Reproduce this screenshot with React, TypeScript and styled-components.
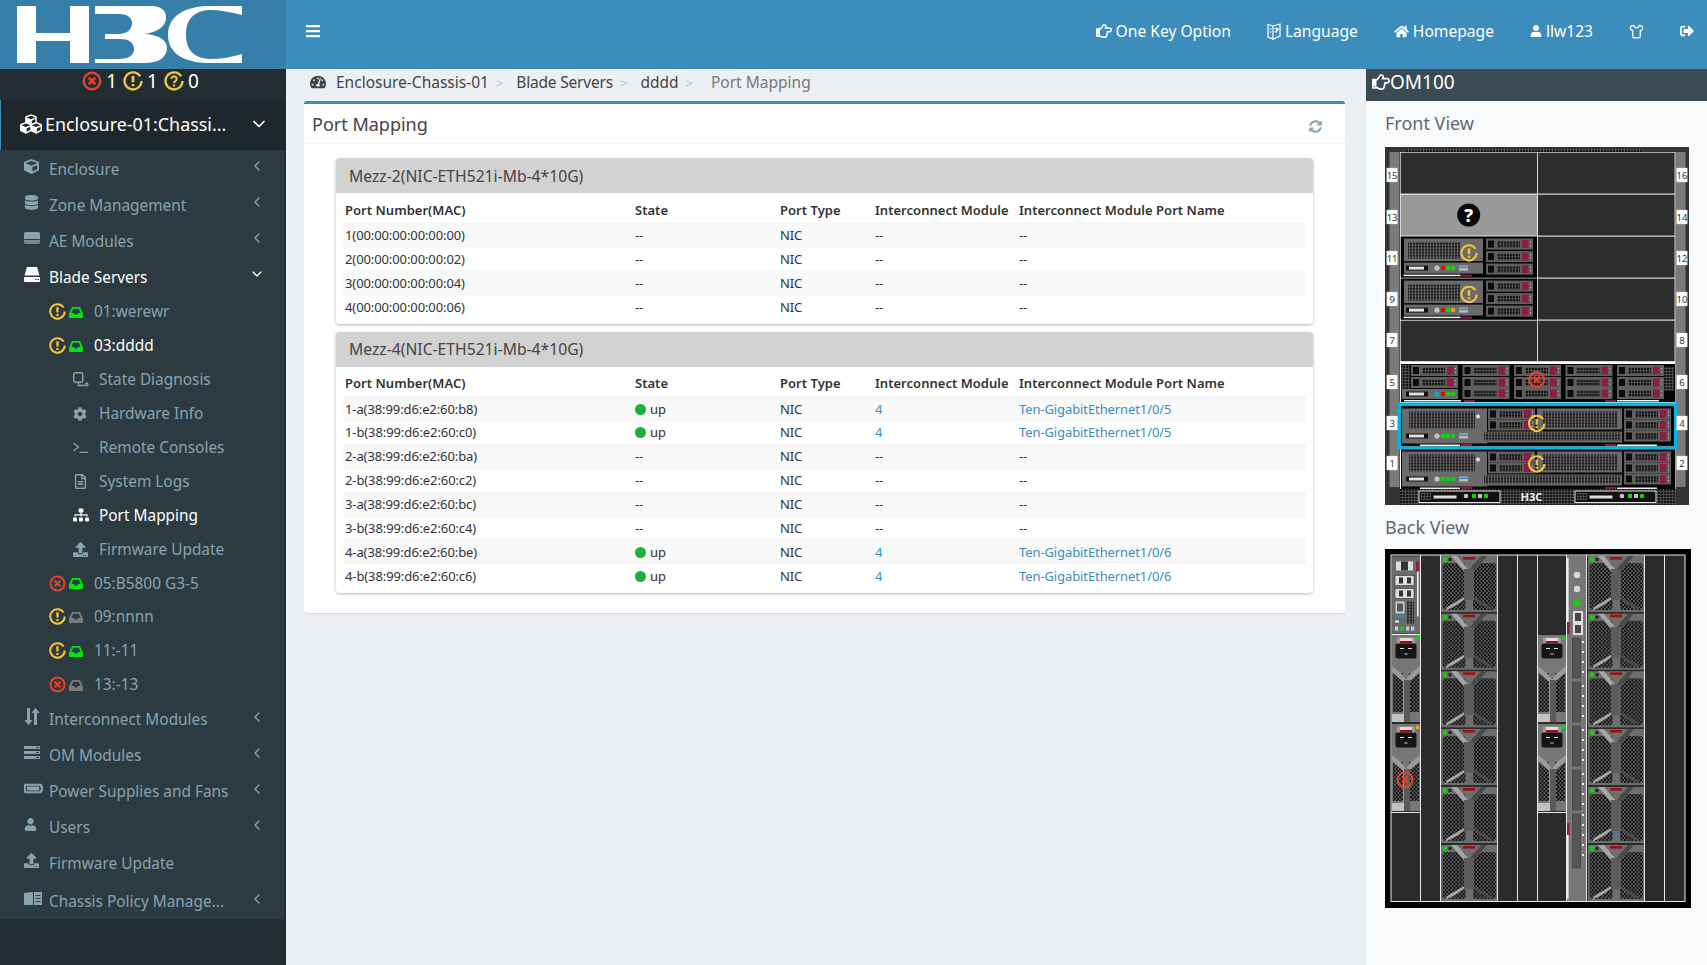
import React from "react";
import styled, { createGlobalStyle } from "styled-components";
import {
  FaBars,
  FaBatteryFull,
  FaCog,
  FaCube,
  FaCubes,
  FaDatabase,
  FaHome,
  FaRegFileAlt,
  FaRegHandPointRight,
  FaSignOutAlt,
  FaSitemap,
  FaSyncAlt,
  FaTachometerAlt,
  FaUpload,
  FaUser,
} from "react-icons/fa";
import { ChevronDown, ChevronLeft, Shirt } from "lucide-react";

const font = `"Noto Sans", "Open Sans", Arial, sans-serif`;

const GlobalStyle = createGlobalStyle`
  html, body { margin: 0; height: 100%; overflow: hidden; }
  body { font-family: ${font}; background: #ecf0f5; color: #333; }
  * { box-sizing: border-box; }
`;

const Page = styled.div`
  display: flex;
  flex-direction: column;
  height: 100vh;
`;

const TopBar = styled.header`
  display: flex;
  height: 69px;
  flex: none;
  background: #3c8dbc;
  color: #fff;
`;

const LogoBox = styled.div`
  width: 286px;
  flex: none;
  background: #367fa9;
  svg { display: block; }
`;

const Burger = styled.div`
  display: flex;
  align-items: center;
  padding: 0 0 7px 19px;
  font-size: 16px;
`;

const TopNav = styled.nav`
  margin-left: auto;
  display: flex;
  align-items: center;
  padding: 0 13px 7px 0;
  font-size: 15.6px;
`;

const TopLink = styled.a<{ $gap?: number }>`
  display: flex;
  align-items: center;
  gap: 4px;
  margin-right: ${({ $gap }) => $gap ?? 36}px;
  svg { flex: none; }
`;

const Body = styled.div`
  display: flex;
  flex: 1;
  min-height: 0;
`;

const Sidebar = styled.aside`
  width: 286px;
  flex: none;
  background: #222d32;
`;

const AlarmRow = styled.div`
  display: flex;
  align-items: center;
  justify-content: center;
  height: 31px;
  gap: 4px;
  padding: 0 3px 8px 0;
  color: #fff;
  font-size: 19px;
  span { margin-right: 2px; }
`;

const ChassisRow = styled.div`
  display: flex;
  align-items: center;
  height: 50px;
  padding: 0 17px 2px 19px;
  background: #1e282c;
  border-left: 1px solid #3c8dbc;
  color: #fff;
  font-size: 17.9px;
  svg:first-child { margin-right: 3px; }
  b { font-weight: 400; flex: 1; white-space: nowrap; }
`;

const SubMenu = styled.div`
  margin-right: 2px;
  padding-top: 1px;
  background: #2c3b41;
  height: 769px;
`;

const MenuRow = styled.div<{ $open?: boolean; $tall?: boolean }>`
  display: flex;
  align-items: center;
  height: ${({ $tall }) => ($tall ? 37 : 36)}px;
  padding: ${({ $tall }) => ($tall ? "3px 19px 0 24px" : "0 19px 0 24px")};
  color: ${({ $open }) => ($open ? "#fff" : "#8aa4af")};
  font-size: 15.4px;
  > span { flex: 1; white-space: nowrap; margin-left: -1px; }
`;

const MenuIcon = styled.i`
  width: 26px;
  flex: none;
  display: flex;
  align-items: center;
  margin-top: -6px;
  font-style: normal;
  line-height: 0;
`;

const Chevron = styled.i`
  display: flex;
  margin-top: -6px;
  font-style: normal;
`;

const BladeRow = styled.div<{ $current?: boolean }>`
  display: flex;
  align-items: center;
  height: 33.9px;
  padding-left: 49px;
  color: ${({ $current }) => ($current ? "#fff" : "#8aa4af")};
  font-size: 15.4px;
  span { margin-left: 11px; }
`;

const InboxShape = styled.svg<{ $on: boolean }>`
  margin-left: 3px;
  margin-top: 1px;
  fill: ${({ $on }) => ($on ? "#00e50a" : "#7c7c7c")};
`;

const LeafRow = styled.div<{ $current?: boolean }>`
  display: flex;
  align-items: center;
  height: 33.9px;
  padding-left: 74px;
  color: ${({ $current }) => ($current ? "#fff" : "#8aa4af")};
  font-size: 15.4px;
  i { width: 26px; flex: none; display: flex; line-height: 0; margin-left: -1px; }
`;

const Main = styled.main`
  flex: 1;
  min-width: 0;
  padding: 0 20px 0 18px;
`;

const Crumbs = styled.div`
  display: flex;
  align-items: center;
  height: 32px;
  padding: 0 0 7px 6px;
  font-size: 15.5px;
  color: #444;
  svg { margin-right: 10px; }
`;

const Crumb = styled.span<{ $last?: boolean; $tight?: boolean }>`
  color: ${({ $last }) => ($last ? "#777" : "#444")};
  margin-left: ${({ $last }) => ($last ? 5 : 0)}px;
  letter-spacing: ${({ $tight }) => ($tight ? "-0.2px" : "0")};
  &:not(:last-child)::after {
    content: ">";
    color: #bbb;
    font-size: 13px;
    letter-spacing: 0;
    margin: 0 13px 0 7px;
  }
`;

const Card = styled.section`
  background: #fff;
  border-top: 3px solid #3c8dbc;
  border-radius: 3px;
  box-shadow: 0 1px 1px rgba(0, 0, 0, 0.1);
  height: 512px;
`;

const CardHead = styled.div`
  display: flex;
  align-items: center;
  justify-content: space-between;
  height: 40px;
  padding: 0 23px 0 8px;
  border-bottom: 1px solid #f4f4f4;
  font-size: 18px;
  color: #444;
  svg { color: #8aa4af; margin-top: 6px; }
`;

const CardBody = styled.div`
  padding: 14px 32px 0;
  display: flex;
  flex-direction: column;
  gap: 8px;
`;

const Mezz = styled.div`
  background: #fff;
  border-radius: 4px;
  box-shadow: 0 1px 3px rgba(0, 0, 0, 0.3);
  padding-bottom: 5px;
`;

const MezzTitle = styled.div`
  display: flex;
  align-items: center;
  height: 35px;
  padding-left: 13px;
  background: #d2d2d2;
  border-radius: 4px 4px 0 0;
  font-size: 15.7px;
  color: #444;
`;

const PortTable = styled.table`
  table-layout: fixed;
  width: 963px;
  margin-left: 7px;
  border-collapse: collapse;
  font-size: 13px;
  color: #333;
  th {
    height: 30px;
    text-align: left;
    padding: 4px 2px 0;
    font-weight: 600;
    letter-spacing: 0.03px;
    white-space: nowrap;
  }
  td {
    height: 23.9px;
    padding: 0 2px;
    border-top: 1px solid #f4f4f4;
    letter-spacing: -0.1px;
    white-space: nowrap;
  }
  tbody tr:nth-child(odd) { background: #f9f9f9; }
  a { color: #3c8dbc; }
`;

const Dot = styled.i`
  display: inline-block;
  width: 11px;
  height: 11px;
  margin-right: 4px;
  border-radius: 50%;
  background: #1bb03e;
  vertical-align: -1px;
`;

const RightPanel = styled.aside`
  width: 342px;
  flex: none;
  background: #f9fafc;
  border-left: 1px solid #e4e7ec;
`;

const PanelHead = styled.div`
  display: flex;
  align-items: center;
  gap: 0;
  height: 32px;
  padding: 0 0 6px 6px;
  background: #3a4b55;
  color: #fff;
  font-size: 19px;
`;

const PanelBody = styled.div`
  padding: 9px 0 0 19px;
`;

const ViewTitle = styled.h4<{ $height: number }>`
  margin: 0;
  height: ${({ $height }) => $height}px;
  font-size: 18px;
  font-weight: 400;
  line-height: 26px;
  color: #5d6a74;
`;

const Rack = styled.svg`
  display: block;
  margin-bottom: 9px;
`;

type Kind = "warn" | "err" | "ask";

const StatusIcon: React.FC<{ kind: Kind; size?: number }> = ({ kind, size = 17 }) => {
  const c = kind === "err" ? "#e8402f" : "#f2c53d";
  return (
    <svg width={size} height={size} viewBox="0 0 16 16" fill="none">
      {kind === "err" ? (
        <circle cx="8" cy="8" r="6.6" stroke={c} strokeWidth="1.9" />
      ) : (
        <path d="M13.7 4.2A6.8 6.8 0 1 0 14.8 8" stroke={c} strokeWidth="1.9" />
      )}
      {kind === "err" && <path d="M5.4 5.4l5.2 5.2M10.6 5.4l-5.2 5.2" stroke={c} strokeWidth="2" />}
      {kind === "warn" && <path d="M8 4v5M8 10.4v1.8" stroke={c} strokeWidth="2.2" />}
      {kind === "ask" && (
        <path d="M5.9 6.2a2.1 2.1 0 1 1 3.2 1.9c-.8.5-1.1.8-1.1 1.6M8 10.8v1.6" stroke={c} strokeWidth="1.7" />
      )}
    </svg>
  );
};

const Inbox: React.FC<{ on: boolean }> = ({ on }) => (
  <InboxShape $on={on} width="14" height="11" viewBox="0 0 14 11">
    <path d="M3 0h8l3 6.5V10a1 1 0 0 1-1 1H1a1 1 0 0 1-1-1V6.5zM4.2 1.8L2.4 6h2.5l.9 1.6h2.4L9.1 6h2.5L9.8 1.8z" fillRule="evenodd" />
  </InboxShape>
);

const AeIcon = () => (
  <svg width="16" height="12" viewBox="0 0 16 12" fill="#8aa4af">
    <path d="M2 0h12a2 2 0 0 1 2 2v5H0V2a2 2 0 0 1 2-2z" />
    <path d="M0 8h16v2a2 2 0 0 1-2 2H2a2 2 0 0 1-2-2z" opacity=".75" />
  </svg>
);

const BladeIcon = () => (
  <svg width="16" height="15" viewBox="0 0 16 15" fill="#fff">
    <path d="M3 0h10l2.5 8.5H.5z" />
    <path d="M1 10h14a1 1 0 0 1 1 1v3a1 1 0 0 1-1 1H1a1 1 0 0 1-1-1v-3a1 1 0 0 1 1-1zM11 12v1h1.5v-1zM13.5 12v1H15v-1z" fillRule="evenodd" />
  </svg>
);

const ArrowsIcon = () => (
  <svg width="16" height="17" viewBox="0 0 16 17" fill="#8aa4af">
    <path d="M3 0h3v12h2.6L4.5 17 .4 12H3zM10 17h3V5h2.6L11.5 0 7.4 5H10z" />
  </svg>
);

const OmIcon = () => (
  <svg width="16" height="13" viewBox="0 0 16 13" fill="#8aa4af">
    <path d="M0 0h16v3H0zM0 5h16v3H0zM0 10h16v3H0z" />
    <path d="M12 1h3v1h-3zM12 6h3v1h-3zM12 11h3v1h-3z" fill="#2c3b41" />
  </svg>
);

const PolicyIcon = () => (
  <svg width="18" height="13" viewBox="0 0 18 13" fill="#8aa4af">
    <path d="M0 1l9-1v13H0z" />
    <path d="M10 0h8v13h-8zM11.5 3v1h5V3zM11.5 6v1h5V6zM11.5 9v1h5V9z" fillRule="evenodd" />
  </svg>
);

const ScopeIcon = () => (
  <svg width="16" height="15" viewBox="0 0 16 15" fill="none" stroke="#8aa4af" strokeWidth="1.4">
    <rect x=".7" y=".7" width="9" height="9.5" rx="1.5" />
    <path d="M5.5 10.5v3h4.5M10 13.5h1.5" />
    <circle cx="13.7" cy="12.5" r="1.3" />
  </svg>
);

const PromptIcon = () => (
  <svg width="15" height="11" viewBox="0 0 15 11" fill="none" stroke="#8aa4af" strokeWidth="1.2">
    <path d="M.5 1l5 4-5 4M6.5 10.4H15" />
  </svg>
);

const LanguageIcon = () => (
  <svg width="14" height="17" viewBox="0 0 14 17" fill="none" stroke="#fff" strokeWidth="1.2">
    <path d="M1 1.5l5 1.5v13l-5-2zM6 3l7-2v12l-7 3z" />
    <path d="M7.5 5.5h4M9.5 4.5v5M7.8 9c1.5-.3 2.8-1.4 3.4-3" fill="none" />
    <path d="M2.4 6h2.2M2.4 9h2.2" />
  </svg>
);

const HandIcon = styled(FaRegHandPointRight)`
  flex: none;
`;

const Logo = () => (
  <svg width="286" height="69" viewBox="0 0 286 69" fill="#fff">
    <path d="M17 6h19v27h34V6h19v57H70V41H36v22H17z" />
    <path d="M95 6h58c10 1 14 6 13 13-1 8-9 13-21 15 15 1 23 7 22 15-1 9-9 14-22 14H95v-4h24c10 0 15-4 15-10 0-7-6-10-14-10h-15v-5h15c8-1 12-5 12-11 0-6-6-9-13-9H95z" />
    <path d="M242 6v9c-11-3-22-5-33-5-15 1-23 9-23 25 0 15 8 23 23 24 12 0 23-2 33-5v9h-36c-24-1-38-11-38-28 0-18 15-28 39-29z" />
  </svg>
);

const Holes: React.FC<{ id: string; bg: string; hole: string; hex?: boolean }> = ({ id, bg, hole, hex }) =>
  hex ? (
    <pattern id={id} width="3.6" height="4" patternUnits="userSpaceOnUse">
      <rect width="3.6" height="4" fill={bg} />
      <circle cx=".9" cy="1" r="1.3" fill={hole} />
      <circle cx="2.7" cy="3" r="1.3" fill={hole} />
    </pattern>
  ) : (
    <pattern id={id} width="3" height="3" patternUnits="userSpaceOnUse">
      <rect width="3" height="3" fill={bg} />
      <rect width="2.2" height="2.2" fill={hole} />
    </pattern>
  );

const Drive: React.FC<{ x: number; y: number }> = ({ x, y }) => (
  <g transform={`translate(${x} ${y})`}>
    <rect width="47" height="11" fill="#5f5f5f" />
    <rect x="2" y="2" width="6" height="7" fill="#0c0c0c" />
    <rect x="11" y="2.5" width="23" height="6.5" fill="url(#dotsFine)" />
    <rect x="36" y="1.5" width="6.5" height="8" fill="#8e1b47" />
    <rect x="44" y="3" width="1" height="1" fill="#ccc" />
    <rect x="44" y="6.5" width="1" height="1" fill="#ccc" />
  </g>
);

const FrontPort: React.FC<{ x: number; y: number; leds: string[]; blue?: boolean }> = ({ x, y, leds, blue }) => (
  <g transform={`translate(${x} ${y})`}>
    <rect width="22" height="5" fill="#111" />
    <rect x="3" y="1" width="15" height="3" fill="#e2e2e2" />
    <circle cx="31" cy="2.5" r="2.6" fill={leds[0]} />
    <rect x="35" y=".5" width="4" height="4" fill={leds[1]} />
    <rect x="40" y=".5" width="4" height="4" fill={leds[2]} />
    <circle cx="47" cy="2.5" r="2.3" fill={leds[3]} />
    {blue && (
      <g>
        <rect x="53" y="0" width="9" height="5" fill="#bbb" />
        <rect x="53" y="1" width="9" height="1.6" fill="#2b8fd6" />
      </g>
    )}
  </g>
);

const HalfBlade: React.FC<{ y: number; lastLed: string }> = ({ y, lastLed }) => (
  <g transform={`translate(16 ${y})`}>
    <rect width="136" height="41" fill="#050505" />
    <rect x="3" y="2" width="79" height="22.5" fill="#6a6a6a" />
    <rect x="7" y="5.5" width="52" height="16.5" fill="url(#dots)" />
    <rect x="3" y="26" width="79" height="11" fill="#6a6a6a" />
    <FrontPort x={5} y={29} leds={["#bfc3cc", "#ff0000", "#00e000", lastLed]} blue />
    <rect x="2.5" y="38" width="57" height="1.6" fill="#eee" />
    <rect x="60" y="38" width="11" height="2" fill="#8e1b47" />
    <Drive x={85} y={2} />
    <Drive x={85} y={14.5} />
    <Drive x={85} y={27} />
  </g>
);

const FullBlade: React.FC<{ y: number }> = ({ y }) => (
  <g transform={`translate(17 ${y})`}>
    <rect x="-1" y="-2" width="274" height="41" fill="#050505" />
    <rect x="0" y="1" width="85" height="35" fill="#6a6a6a" />
    <rect x="7" y="4" width="66" height="17" fill="url(#dots)" />
    <circle cx="76" cy="9" r="2" fill="#e2e2e2" />
    <FrontPort x={4} y={26} leds={["#bfc3cc", "#00e000", "#00e000", "#00e000"]} blue />
    <rect x="82" y="24" width="138" height="11" fill="#6a6a6a" />
    <rect x="82" y="25" width="137" height="8" fill="url(#dots)" />
    <Drive x={86} y={1} />
    <Drive x={86} y={12} />
    <rect x="135" y="1" width="85" height="21" fill="#6a6a6a" />
    <rect x="140" y="4" width="76" height="16" fill="url(#dots)" />
    <Drive x={222} y={1} />
    <Drive x={222} y={12} />
    <Drive x={222} y={23} />
    <rect x="18" y="37" width="40" height="1.6" fill="#eee" />
    <rect x="59" y="36.5" width="11" height="2" fill="#8e1b47" />
    <rect x="203" y="36.5" width="11" height="2" fill="#8e1b47" />
    <rect x="215" y="37" width="40" height="1.6" fill="#eee" />
  </g>
);

const Bezel: React.FC<{ x: number }> = ({ x }) => (
  <g transform={`translate(${x} 344)`}>
    <rect width="81" height="11.5" fill="#111" stroke="#fff" strokeWidth=".9" />
    <rect x="2" y="2" width="10" height="7" fill="url(#dotsFine)" />
    <rect x="14" y="4" width="24" height="4" fill="#ddd" stroke="#111" />
    <circle cx="47" cy="5" r="2.3" fill="#bfc3cc" />
    <rect x="53" y="3" width="4" height="4" fill="#00e000" />
    <rect x="59" y="3" width="4" height="4" fill="#bfc3cc" />
    <circle cx="67" cy="5" r="2.3" fill="#00e000" />
  </g>
);

const Badge: React.FC<{ x: number; y: number; kind: Kind }> = ({ x, y, kind }) => (
  <g transform={`translate(${x - 9} ${y - 9})`}>
    <StatusIcon kind={kind} size={18} />
  </g>
);

const SlotLabel: React.FC<{ x: number; y: number; n: number }> = ({ x, y, n }) => (
  <g transform={`translate(${x} ${y - 7})`}>
    <rect width="10.6" height="14" fill="#fff" stroke="#ccc" strokeWidth=".4" />
    <text x="5.3" y="10.6" textAnchor="middle" fontFamily={font} fontSize="9.5" fill="#333">
      {n}
    </text>
  </g>
);

const labelY: [number, number][] = [
  [15, 28],
  [13, 70],
  [11, 111],
  [9, 152],
  [7, 193],
  [5, 235],
  [3, 276],
  [1, 316],
];

const FrontView = () => (
  <Rack width="304" height="358" viewBox="0 0 304 358">
    <defs>
      <Holes id="dots" bg="#6a6a6a" hole="#1a1a1a" />
      <Holes id="dotsFine" bg="#555" hole="#151515" />
    </defs>
    <rect width="304" height="358" fill="#333" />
    <rect x="21" y="1.5" width="237" height="3.5" fill="url(#dotsFine)" />
    <rect x="4.5" y="5" width="10" height="335" fill="#7b7b7b" />
    <rect x="291" y="5" width="9.5" height="335" fill="#7b7b7b" />
    <rect x="15" y="5" width="275.5" height="337" fill="#fff" />
    {[5.6, 47.6, 89.6, 131.6, 173.6].map((y, i) =>
      [15.6, 153].map((x) => (
        <rect
          key={`${y}-${x}`}
          x={x}
          y={y}
          width="136.6"
          height={i === 4 ? 40.6 : 41}
          fill={i === 1 && x < 100 ? "#999" : "#2d2d2d"}
        />
      ))
    )}
    <HalfBlade y={89.6} lastLed="#00e000" />
    <HalfBlade y={131.6} lastLed="#f5a623" />
    <rect x="16" y="217" width="274" height="38" fill="#050505" />
    <rect x="16" y="218" width="9" height="25" fill="url(#dotsFine)" />
    {[26, 77.5, 129, 180.5, 232].map((x, i) => (
      <g key={x}>
        <Drive x={x} y={218} />
        <Drive x={x} y={230} />
        {i > 0 && <Drive x={x} y={241} />}
      </g>
    ))}
    <rect x="17" y="242" width="56" height="10" fill="#6a6a6a" />
    <FrontPort x={21} y={244.5} leds={["#16a5c9", "#ff0000", "#00e000", "#00e000"]} />
    <rect x="279" y="220" width="10" height="24" fill="url(#dotsFine)" />
    <rect x="19" y="253" width="57" height="1.5" fill="#eee" />
    <rect x="79" y="253" width="11" height="2" fill="#8e1b47" />
    <rect x="220" y="253" width="11" height="2" fill="#8e1b47" />
    <rect x="232" y="253" width="42" height="1.5" fill="#eee" />
    <FullBlade y={260.5} />
    <FullBlade y={303.5} />
    <rect x="14.5" y="257" width="276" height="44" fill="none" stroke="#00b4e6" strokeWidth="3" />
    <rect x="15" y="342" width="276" height="16" fill="url(#dotsFine)" />
    <Bezel x={34} />
    <Bezel x={190} />
    <text x="146.5" y="354" textAnchor="middle" fontFamily={font} fontWeight="700" fontSize="11" fill="#eee">
      H3C
    </text>
    {labelY.map(([n, y]) => (
      <React.Fragment key={n}>
        <SlotLabel x={1.8} y={y} n={n} />
        <SlotLabel x={291.6} y={y} n={n + 1} />
      </React.Fragment>
    ))}
    <circle cx="83.7" cy="68" r="11.5" fill="#0a0a0a" />
    <text x="83.7" y="74.5" textAnchor="middle" fontFamily={font} fontWeight="800" fontSize="18" fill="#fff">
      ?
    </text>
    <Badge x={84} y={106} kind="warn" />
    <Badge x={84} y={147.5} kind="warn" />
    <Badge x={151.7} y={232.5} kind="err" />
    <Badge x={151.7} y={276.5} kind="warn" />
    <Badge x={151.7} y={317} kind="warn" />
  </Rack>
);

const Fan: React.FC<{ x: number; y: number }> = ({ x, y }) => (
  <g transform={`translate(${x} ${y})`}>
    <rect width="56" height="56" fill="#6e6e6e" />
    <rect x="1.5" y="7" width="23" height="47" rx="3" fill="url(#hex)" />
    <rect x="32" y="7" width="23" height="47" rx="3" fill="url(#hex)" />
    <path d="M10 0h6l11 13v28L14 50l-10 5 2-4 17-10V15z" fill="#a6a6a6" />
    <path d="M46 0h-6L29 13v28l13 9 10 5-2-4-17-10V15z" fill="#4a4a4a" />
    <rect x="23" y="13" width="10" height="31" fill="#5c5c5c" />
    <rect x="22" y="1" width="12" height="2.6" fill="#a30d0d" />
    <rect x="2" y="1.5" width="4" height="4" fill="#00e000" />
    <rect x="7.5" y="2" width="3" height="3" fill="#222" />
  </g>
);

const Psu: React.FC<{ x: number; y: number; led: string }> = ({ x, y, led }) => (
  <g transform={`translate(${x} ${y})`}>
    <rect width="28" height="87" fill="#777" />
    <rect x="5" y="2.5" width="18" height="7" fill="#9b9b9b" />
    <rect x="8" y="3" width="12" height="3" fill="#ddd" />
    <rect x="8" y="6" width="12" height="2.4" fill="#a30d0d" />
    <rect x="24" y="1.5" width="3" height="3.5" fill={led} />
    <rect x="3.5" y="8.5" width="21" height="15" rx="2" fill="#151515" />
    <path d="M8 13.5h4M16 13.5h4M12.5 19h3" stroke="#ddd" strokeWidth="1" />
    <rect x="1" y="38" width="10" height="39" fill="url(#hex)" />
    <rect x="17" y="38" width="10" height="39" fill="url(#hex)" />
    <path d="M0 31l10 8 4 6v42h-3V47L0 37zM28 31l-10 8-4 6v42h3V47l11-10z" fill="#9a9a9a" />
    <rect y="79" width="12" height="8" fill="#c2c2c2" />
    <rect x="12" y="45" width="6" height="42" fill="#5a5a5a" />
  </g>
);

const OmModule = () => (
  <g transform="translate(7 7.5)">
    <rect width="28" height="77" fill="#6a6a6a" />
    <rect x="4" y="5" width="17" height="9" fill="#ddd" />
    <rect x="9" y="5" width="7" height="9" fill="#333" />
    <rect x="3" y="19" width="19" height="10" fill="#ddd" stroke="#333" strokeWidth=".6" />
    <path d="M7 21h4v6H7zM15 21h4v6h-4z" fill="#333" />
    <rect x="3" y="32" width="19" height="10" fill="#ddd" stroke="#333" strokeWidth=".6" />
    <path d="M7 34h4v6H7zM15 34h4v6h-4z" fill="#333" />
    <rect x="3.5" y="45" width="9" height="12" fill="#ccc" />
    <rect x="5" y="47" width="6" height="8" fill="#555" />
    <rect x="15" y="45" width="7" height="22" fill="url(#backDots)" />
    <rect x="3.5" y="59" width="9" height="2" fill="#2b8fd6" />
    <rect x="3" y="64" width="4" height="2" fill="#eee" />
    <rect x="3" y="70" width="3.2" height="4" fill="#ccc" />
    <rect x="8.5" y="70" width="3.2" height="4" fill="#00e000" />
    <rect x="14" y="70" width="3.2" height="4" fill="#ccc" />
    <rect x="19" y="70" width="3.2" height="4" fill="#ccc" />
    <rect x="24" y="5" width="3" height="10" fill="#8e1b47" />
    <rect x="25" y="15" width="1.6" height="45" fill="#eee" />
  </g>
);

const SwitchModule = () => (
  <g transform="translate(182 7)">
    <rect width="19" height="345" fill="#777" />
    <rect x="0" y="2" width="1.6" height="64" fill="#eee" />
    <rect x="0" y="66" width="2.6" height="12" fill="#8e1b47" />
    <rect x="0" y="267" width="2.6" height="12" fill="#8e1b47" />
    <rect x="0" y="279" width="1.6" height="64" fill="#eee" />
    <circle cx="10" cy="19" r="3.2" fill="#d5d9e3" />
    <circle cx="10" cy="33" r="3.2" fill="#d5d9e3" />
    <circle cx="10" cy="47" r="3.2" fill="#00e000" />
    <rect x="6" y="55" width="10" height="24" fill="#ddd" />
    <path d="M8 57h6v8H8zM8 69h6v8H8z" fill="#444" />
    {[82, 126, 170, 214, 258].map((y, i) => (
      <g key={y}>
        <rect x="5.5" y={y} width="8" height={i === 4 ? 54 : 40} fill="#555" stroke="#3a3a3a" strokeWidth=".6" />
        {(i === 4 ? [0, 10, 20, 30, 40] : [3, 13, 23, 33]).map((d) => (
          <rect key={d} x="15" y={y + d} width="2" height="2" fill="#eee" />
        ))}
      </g>
    ))}
  </g>
);

const fanRows = [7, 64.7, 122.3, 180, 238, 296];
const backLines = [35, 55, 112, 132, 152, 181, 201, 259, 279];

const BackView = () => (
  <Rack width="306" height="359" viewBox="0 0 306 359">
    <defs>
      <Holes id="hex" bg="#666" hole="#141414" hex />
      <Holes id="backDots" bg="#6a6a6a" hole="#222" />
    </defs>
    <rect width="306" height="359" fill="#000" />
    <rect x="6" y="6" width="294" height="346.5" fill="#2b2b2b" stroke="#fff" strokeWidth=".9" />
    {backLines.map((x) => (
      <rect key={x} x={x} y="6" width=".9" height="346.5" fill="#fff" />
    ))}
    <rect x="6" y="263" width="29" height=".9" fill="#fff" />
    <rect x="152" y="263" width="29" height=".9" fill="#fff" />
    <rect x="7" y="85" width="28" height="1" fill="#fff" />
    {fanRows.map((y) => (
      <React.Fragment key={y}>
        <Fan x={56} y={y} />
        <Fan x={203} y={y} />
      </React.Fragment>
    ))}
    <OmModule />
    <Psu x={7} y={86} led="#00e000" />
    <Psu x={7} y={175} led="#f5a623" />
    <Psu x={153} y={86} led="#00e000" />
    <Psu x={153} y={175} led="#00e000" />
    <SwitchModule />
    <Badge x={20} y={230.7} kind="err" />
  </Rack>
);

type Port = { name: string; up?: boolean; iface?: string };

const mezz2: Port[] = [
  { name: "1(00:00:00:00:00:00)" },
  { name: "2(00:00:00:00:00:02)" },
  { name: "3(00:00:00:00:00:04)" },
  { name: "4(00:00:00:00:00:06)" },
];

const mezz4: Port[] = [
  { name: "1-a(38:99:d6:e2:60:b8)", up: true, iface: "Ten-GigabitEthernet1/0/5" },
  { name: "1-b(38:99:d6:e2:60:c0)", up: true, iface: "Ten-GigabitEthernet1/0/5" },
  { name: "2-a(38:99:d6:e2:60:ba)" },
  { name: "2-b(38:99:d6:e2:60:c2)" },
  { name: "3-a(38:99:d6:e2:60:bc)" },
  { name: "3-b(38:99:d6:e2:60:c4)" },
  { name: "4-a(38:99:d6:e2:60:be)", up: true, iface: "Ten-GigabitEthernet1/0/6" },
  { name: "4-b(38:99:d6:e2:60:c6)", up: true, iface: "Ten-GigabitEthernet1/0/6" },
];

const MezzCard: React.FC<{ title: string; ports: Port[] }> = ({ title, ports }) => (
  <Mezz>
    <MezzTitle>{title}</MezzTitle>
    <PortTable>
      <colgroup>
        <col width="290" />
        <col width="145" />
        <col width="95" />
        <col width="144" />
        <col />
      </colgroup>
      <thead>
        <tr>
          <th>Port Number(MAC)</th>
          <th>State</th>
          <th>Port Type</th>
          <th>Interconnect Module</th>
          <th>Interconnect Module Port Name</th>
        </tr>
      </thead>
      <tbody>
        {ports.map((p) => (
          <tr key={p.name}>
            <td>{p.name}</td>
            <td>
              {p.up ? (
                <>
                  <Dot />
                  up
                </>
              ) : (
                "--"
              )}
            </td>
            <td>NIC</td>
            <td>{p.iface ? <a>4</a> : "--"}</td>
            <td>{p.iface ? <a>{p.iface}</a> : "--"}</td>
          </tr>
        ))}
      </tbody>
    </PortTable>
  </Mezz>
);

const Menu: React.FC<{ icon: React.ReactNode; label: string; open?: boolean; flat?: boolean; tall?: boolean }> = ({
  icon,
  label,
  open,
  flat,
  tall,
}) => (
  <MenuRow $open={open} $tall={tall}>
    <MenuIcon>{icon}</MenuIcon>
    <span>{label}</span>
    {!flat && <Chevron>{open ? <ChevronDown size={16} /> : <ChevronLeft size={16} />}</Chevron>}
  </MenuRow>
);

const Blade: React.FC<{ kind: Kind; on: boolean; label: string; current?: boolean }> = ({ kind, on, label, current }) => (
  <BladeRow $current={current}>
    <StatusIcon kind={kind} />
    <Inbox on={on} />
    <span>{label}</span>
  </BladeRow>
);

const App: React.FC = () => (
  <Page>
    <GlobalStyle />
    <TopBar>
      <LogoBox>
        <Logo />
      </LogoBox>
      <Burger>
        <FaBars size={16} />
      </Burger>
      <TopNav>
        <TopLink>
          <HandIcon size={16} />
          One Key Option
        </TopLink>
        <TopLink>
          <LanguageIcon />
          Language
        </TopLink>
        <TopLink>
          <FaHome size={15} />
          Homepage
        </TopLink>
        <TopLink $gap={36}>
          <FaUser size={12} />
          llw123
        </TopLink>
        <TopLink $gap={36}>
          <Shirt size={15} />
        </TopLink>
        <TopLink $gap={0}>
          <FaSignOutAlt size={14} />
        </TopLink>
      </TopNav>
    </TopBar>
    <Body>
      <Sidebar>
        <AlarmRow>
          <StatusIcon kind="err" size={20} />
          <span>1</span>
          <StatusIcon kind="warn" size={20} />
          <span>1</span>
          <StatusIcon kind="ask" size={20} />
          <span>0</span>
        </AlarmRow>
        <ChassisRow>
          <FaCubes size={22} />
          <b>Enclosure-01:Chassi...</b>
          <ChevronDown size={20} />
        </ChassisRow>
        <SubMenu>
          <Menu icon={<FaCube size={15} />} label="Enclosure" />
          <Menu icon={<FaDatabase size={15} />} label="Zone Management" />
          <Menu icon={<AeIcon />} label="AE Modules" />
          <Menu icon={<BladeIcon />} label="Blade Servers" open />
          <Blade kind="warn" on label="01:werewr" />
          <Blade kind="warn" on label="03:dddd" current />
          <LeafRow>
            <i><ScopeIcon /></i>State Diagnosis
          </LeafRow>
          <LeafRow>
            <i><FaCog size={14} /></i>Hardware Info
          </LeafRow>
          <LeafRow>
            <i><PromptIcon /></i>Remote Consoles
          </LeafRow>
          <LeafRow>
            <i><FaRegFileAlt size={15} /></i>System Logs
          </LeafRow>
          <LeafRow $current>
            <i><FaSitemap size={16} /></i>Port Mapping
          </LeafRow>
          <LeafRow>
            <i><FaUpload size={15} /></i>Firmware Update
          </LeafRow>
          <Blade kind="err" on label="05:B5800 G3-5" />
          <Blade kind="warn" on={false} label="09:nnnn" />
          <Blade kind="warn" on label="11:-11" />
          <Blade kind="err" on={false} label="13:-13" />
          <Menu icon={<ArrowsIcon />} label="Interconnect Modules" />
          <Menu icon={<OmIcon />} label="OM Modules" />
          <Menu icon={<FaBatteryFull size={19} />} label="Power Supplies and Fans" />
          <Menu icon={<FaUser size={13} />} label="Users" />
          <Menu icon={<FaUpload size={15} />} label="Firmware Update" flat />
          <Menu icon={<PolicyIcon />} label="Chassis Policy Manage..." tall />
        </SubMenu>
      </Sidebar>
      <Main>
        <Crumbs>
          <FaTachometerAlt size={16} />
          <Crumb>Enclosure-Chassis-01</Crumb>
          <Crumb $tight>Blade Servers</Crumb>
          <Crumb>dddd</Crumb>
          <Crumb $last>Port Mapping</Crumb>
        </Crumbs>
        <Card>
          <CardHead>
            Port Mapping
            <FaSyncAlt size={13} />
          </CardHead>
          <CardBody>
            <MezzCard title="Mezz-2(NIC-ETH521i-Mb-4*10G)" ports={mezz2} />
            <MezzCard title="Mezz-4(NIC-ETH521i-Mb-4*10G)" ports={mezz4} />
          </CardBody>
        </Card>
      </Main>
      <RightPanel>
        <PanelHead>
          <HandIcon size={18} />
          OM100
        </PanelHead>
        <PanelBody>
          <ViewTitle $height={37}>Front View</ViewTitle>
          <FrontView />
          <ViewTitle $height={35}>Back View</ViewTitle>
          <BackView />
        </PanelBody>
      </RightPanel>
    </Body>
  </Page>
);

export default App;
